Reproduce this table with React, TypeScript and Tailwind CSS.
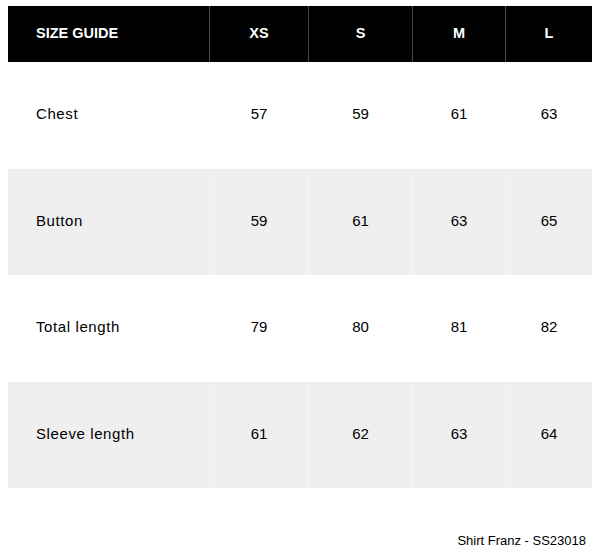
const sizes = ["XS", "S", "M", "L"];

const rows = [
  { label: "Chest", values: [57, 59, 61, 63] },
  { label: "Button", values: [59, 61, 63, 65] },
  { label: "Total length", values: [79, 80, 81, 82] },
  { label: "Sleeve length", values: [61, 62, 63, 64] },
];

const cols = "grid grid-cols-[201px_99px_104px_93px_87px]";

function App() {
  return (
    <div
      className="w-[604px] h-[553px] bg-white px-2 pt-1.5 text-black"
      style={{ fontFamily: '"Liberation Sans", Arial, sans-serif' }}
    >
      <div className="w-[584px]">
        <div className={`${cols} h-14 bg-black text-white text-[14.5px] font-bold`}>
          <div className="flex items-center pl-7">SIZE GUIDE</div>
          {sizes.map((s) => (
            <div key={s} className="flex items-center justify-center border-l border-[#4a4a4a]">
              {s}
            </div>
          ))}
        </div>
        {rows.map((r, i) => (
          <div
            key={r.label}
            className={`${cols} h-[106.5px] text-[15px] ${i % 2 === 1 ? "bg-[#efefef]" : "bg-white"}`}
          >
            <div className="flex items-center pl-7 pb-0.5 tracking-[0.04em]">{r.label}</div>
            {r.values.map((v, j) => (
              <div
                key={j}
                className={`flex items-center justify-center pb-0.5 border-l ${i % 2 === 1 ? "border-[#f4f4f4]" : "border-white"}`}
              >
                {v}
              </div>
            ))}
          </div>
        ))}
        <div className="flex justify-end pr-1.5 pt-[43px] text-[13px]">Shirt Franz - SS23018</div>
      </div>
    </div>
  );
}

export default App;
